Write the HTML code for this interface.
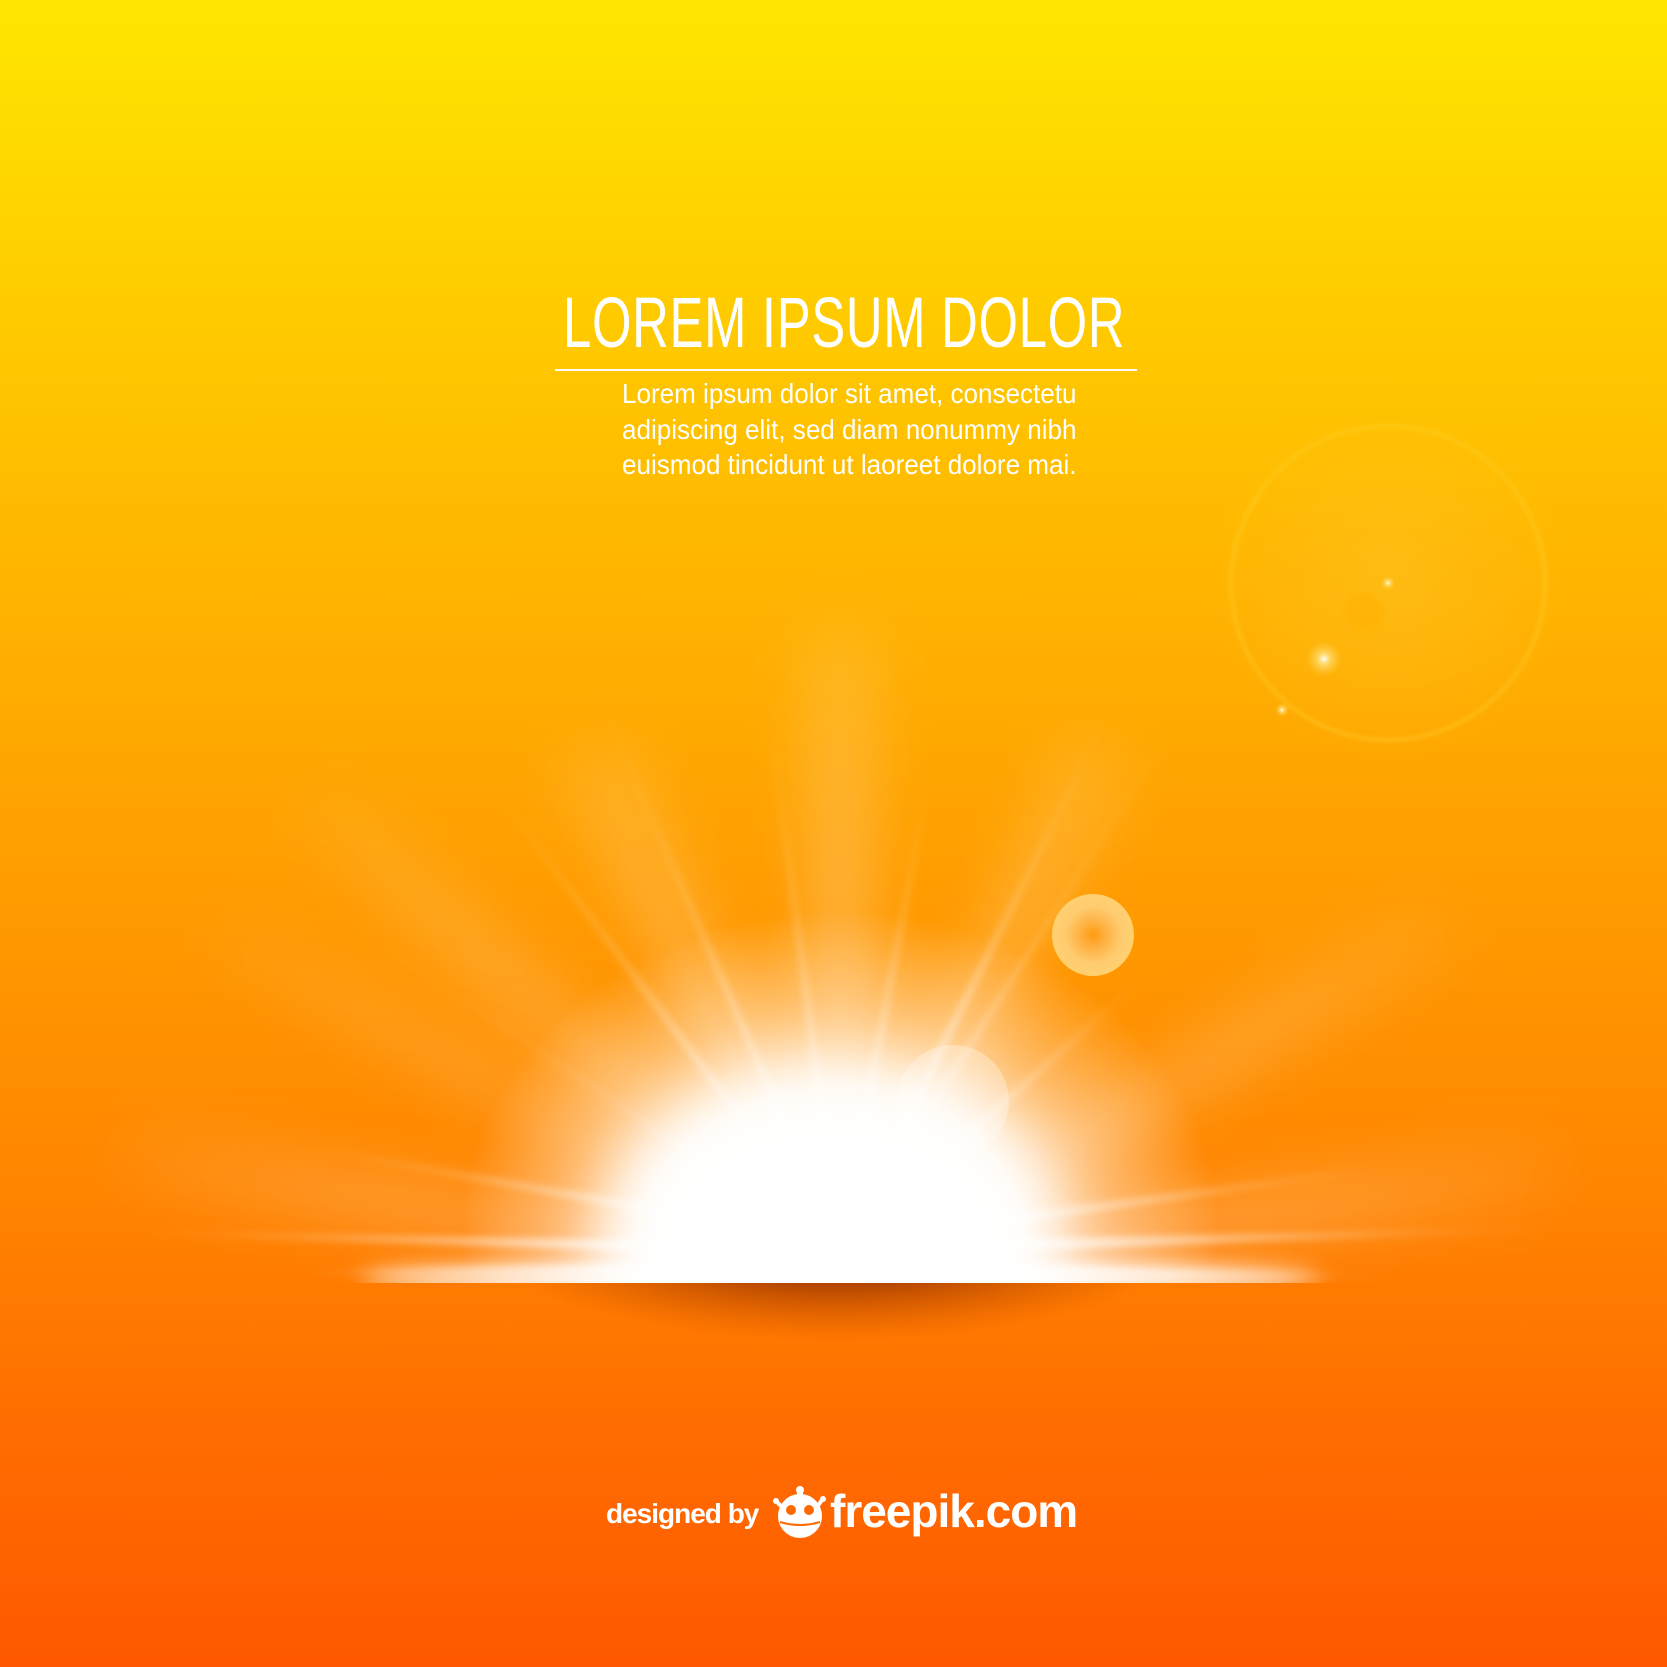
<!DOCTYPE html>
<html><head><meta charset="utf-8">
<style>
html,body{margin:0;padding:0;width:1667px;height:1667px;overflow:hidden}
body{position:relative;background:linear-gradient(180deg,#ffe600 0%,#ffd000 15%,#ffb400 35%,#ff9a00 55%,#ff8400 72%,#ff6e00 85%,#ff5800 100%);font-family:"Liberation Sans",sans-serif}
svg{position:absolute;left:0;top:0}
.t{position:absolute;color:#fff;white-space:nowrap}
</style></head><body>
<svg width="1667" height="1667" viewBox="0 0 1667 1667">
<defs>
<filter id="b30" x="-50%" y="-50%" width="200%" height="200%"><feGaussianBlur stdDeviation="30"/></filter>
<filter id="b12" x="-50%" y="-50%" width="200%" height="200%"><feGaussianBlur stdDeviation="12"/></filter>
<filter id="b4" x="-50%" y="-50%" width="200%" height="200%"><feGaussianBlur stdDeviation="4"/></filter>
<filter id="b2" x="-50%" y="-50%" width="200%" height="200%"><feGaussianBlur stdDeviation="2"/></filter>
<radialGradient id="fade" gradientUnits="userSpaceOnUse" cx="840" cy="1260" r="760">
<stop offset="0" stop-color="#fff"/><stop offset="0.35" stop-color="#fff" stop-opacity="0.85"/><stop offset="1" stop-color="#fff" stop-opacity="0"/></radialGradient>
<mask id="m" maskUnits="userSpaceOnUse" x="0" y="0" width="1667" height="1667"><rect x="0" y="0" width="1667" height="1283" fill="url(#fade)"/></mask>
<clipPath id="above"><rect x="0" y="0" width="1667" height="1283"/></clipPath>
<clipPath id="below"><rect x="0" y="1283" width="1667" height="400"/></clipPath>
<radialGradient id="glow" cx="50%" cy="50%" r="50%">
<stop offset="0" stop-color="#fff" stop-opacity="1"/><stop offset="0.45" stop-color="#fff" stop-opacity="0.95"/>
<stop offset="0.72" stop-color="#fff" stop-opacity="0.45"/><stop offset="1" stop-color="#fff" stop-opacity="0"/></radialGradient>
<radialGradient id="sh" cx="50%" cy="20%" r="50%">
<stop offset="0" stop-color="#7e2400" stop-opacity="1"/><stop offset="0.45" stop-color="#a03800" stop-opacity="0.8"/><stop offset="1" stop-color="#c84e00" stop-opacity="0"/></radialGradient>
<radialGradient id="bub" cx="50%" cy="50%" r="50%">
<stop offset="0" stop-color="#ff9a10"/><stop offset="0.3" stop-color="#ffb040"/><stop offset="0.7" stop-color="#ffcc70"/><stop offset="1" stop-color="#ffd070"/></radialGradient>
<radialGradient id="ringin" cx="50%" cy="50%" r="50%">
<stop offset="0" stop-color="#ffc020" stop-opacity="0.6"/><stop offset="1" stop-color="#ffc020" stop-opacity="0"/></radialGradient>
<radialGradient id="spark" cx="50%" cy="50%" r="50%">
<stop offset="0" stop-color="#fff" stop-opacity="1"/><stop offset="0.3" stop-color="#ffe890" stop-opacity="0.7"/><stop offset="1" stop-color="#ffd050" stop-opacity="0"/></radialGradient>
</defs>
<circle cx="1388" cy="583" r="180" fill="url(#ringin)"/>
<circle cx="1388" cy="583" r="157" fill="none" stroke="#ffd430" stroke-opacity="0.5" stroke-width="3" filter="url(#b2)"/>
<circle cx="1364" cy="612" r="20" fill="#ffb000" opacity="0.5" filter="url(#b2)"/>
<circle cx="1324" cy="659" r="18" fill="url(#spark)"/>
<circle cx="1388" cy="583" r="7" fill="url(#spark)"/>
<circle cx="1282" cy="710" r="7" fill="url(#spark)"/>
<g mask="url(#m)">
<g filter="url(#b30)" fill="#fff">
<polygon points="840,1280 800,620 880,620" opacity="0.45"/>
<polygon points="840,1280 270,810 320,760" opacity="0.4"/>
<polygon points="840,1280 1450,880 1470,950" opacity="0.4"/>
<polygon points="840,1280 60,1110 60,1180" opacity="0.5"/>
<polygon points="840,1280 1620,1120 1620,1200" opacity="0.5"/>
<polygon points="840,1280 550,760 630,740" opacity="0.35"/>
<polygon points="840,1280 1070,730 1140,760" opacity="0.35"/>
<polygon points="840,1280 200,950 220,900" opacity="0.35"/>
</g>
<g filter="url(#b4)" fill="#fff">
<polygon points="836,1250 844,1250 480,770" opacity="0.7"/>
<polygon points="836,1250 844,1250 600,700" opacity="0.6"/>
<polygon points="836,1250 844,1250 770,720" opacity="0.5"/>
<polygon points="836,1250 844,1250 930,770" opacity="0.55"/>
<polygon points="836,1250 846,1250 1110,710" opacity="0.65"/>
<polygon points="836,1250 844,1250 1170,730" opacity="0.5"/>
<polygon points="836,1250 846,1250 1140,980" opacity="0.7"/>
<polygon points="836,1250 844,1258 330,910" opacity="0.55"/>
<polygon points="840,1244 840,1258 120,1232" opacity="0.85"/>
<polygon points="840,1244 840,1258 1560,1228" opacity="0.85"/>
<polygon points="840,1262 840,1274 300,1272" opacity="0.85"/>
<polygon points="840,1262 840,1274 1380,1276" opacity="0.85"/>
<polygon points="840,1238 840,1248 1380,1168" opacity="0.7"/>
<polygon points="840,1238 840,1248 320,1150" opacity="0.7"/>
</g>
</g>
<g clip-path="url(#above)">
<ellipse cx="840" cy="1230" rx="380" ry="320" fill="url(#glow)" opacity="0.85"/>
<ellipse cx="830" cy="1250" rx="230" ry="180" fill="#fff" filter="url(#b30)"/>
<ellipse cx="840" cy="1280" rx="480" ry="18" fill="#fff" filter="url(#b12)"/>
</g>
<g clip-path="url(#below)">
<ellipse cx="835" cy="1300" rx="350" ry="100" fill="url(#sh)"/>
</g>
<line x1="540" y1="1283" x2="1140" y2="1283" stroke="#9b7aa8" stroke-width="2" opacity="0.45" filter="url(#b2)"/>
<circle cx="953" cy="1101" r="56" fill="#fff" opacity="0.3"/>
<circle cx="1093" cy="935" r="41" fill="url(#bub)"/>
<rect x="555" y="369" width="582" height="2" fill="#fff"/>
<g fill="#fff" transform="translate(775,1488)">
<circle cx="25" cy="28" r="22"/>
<rect x="22" y="0" width="6" height="10"/>
<circle cx="25" cy="2" r="4"/>
<circle cx="1" cy="13" r="3"/><circle cx="48" cy="11" r="3"/>
<line x1="2" y1="14" x2="8" y2="20" stroke="#fff" stroke-width="4"/>
<line x1="47" y1="12" x2="42" y2="19" stroke="#fff" stroke-width="4"/>
<circle cx="16" cy="22" r="5" fill="#ff6a00"/><circle cx="34" cy="22" r="5" fill="#ff6a00"/>
<path d="M5 34 Q25 40 45 34" stroke="#ff6a00" stroke-width="2" fill="none"/>
</g>
</svg>
<div class="t" style="left:563px;top:284px;font-size:71px;line-height:80px;transform:scaleX(0.715);transform-origin:0 0;letter-spacing:1px">LOREM IPSUM DOLOR</div>
<div class="t" style="left:622px;top:376px;font-size:28px;line-height:35.5px;transform:scaleX(0.93);transform-origin:0 0">Lorem ipsum dolor sit amet, consectetu<br>adipiscing elit, sed diam nonummy nibh<br>euismod tincidunt ut laoreet dolore mai.</div>
<div class="t" style="left:606px;top:1498px;font-size:28px;font-weight:bold;letter-spacing:-1px">designed by</div>
<div class="t" style="left:830px;top:1484px;font-size:46px;font-weight:bold;letter-spacing:-1px">freepik.com</div>
</body></html>
